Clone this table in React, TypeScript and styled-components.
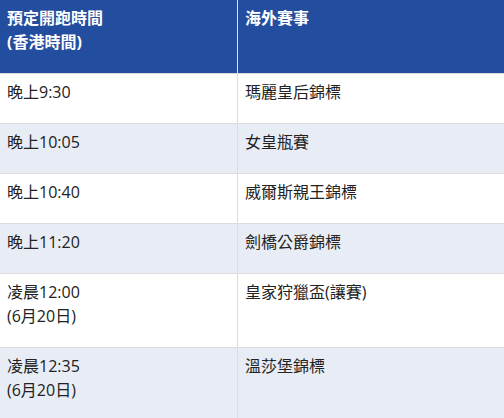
import React from 'react';
import styled, { createGlobalStyle } from 'styled-components';

const GlobalStyle = createGlobalStyle`
  html, body {
    margin: 0;
    padding: 0;
    background: #fff;
  }
  body {
    font-family: "Open Sans", "Noto Sans CJK TC", sans-serif;
  }
`;

const races = [
  { time: ['晚上9:30'], name: '瑪麗皇后錦標' },
  { time: ['晚上10:05'], name: '女皇瓶賽' },
  { time: ['晚上10:40'], name: '威爾斯親王錦標' },
  { time: ['晚上11:20'], name: '劍橋公爵錦標' },
  { time: ['凌晨12:00', '(6月20日)'], name: '皇家狩獵盃(讓賽)' },
  { time: ['凌晨12:35', '(6月20日)'], name: '溫莎堡錦標' },
];

const Table = styled.table`
  width: 100%;
  border-collapse: collapse;
  table-layout: fixed;
  font-size: 16px;
  line-height: 24px;
  color: #222;
`;

const HeadCell = styled.th`
  background: #234e9f;
  color: #fff;
  font-weight: bold;
  text-align: left;
  vertical-align: top;
  padding: 6px 7px 19px;
  border-right: 1px solid #dfe4ee;
  border-bottom: 1px solid #dcdcdc;
  &:first-child {
    width: 223px;
  }
  &:last-child {
    border-right: none;
  }
`;

const Row = styled.tr<{ $shaded?: boolean }>`
  background: ${({ $shaded }) => ($shaded ? '#e8ecf4' : '#fff')};
`;

const Cell = styled.td`
  text-align: left;
  vertical-align: top;
  padding: 6px 7px 19px;
  border-right: 1px solid #dcdcdc;
  border-bottom: 1px solid #dcdcdc;
  &:last-child {
    border-right: none;
  }
`;

const Line = styled.div``;

export default function App() {
  return (
    <>
      <GlobalStyle />
      <Table>
        <thead>
          <tr>
            <HeadCell>
              <Line>預定開跑時間</Line>
              <Line>(香港時間)</Line>
            </HeadCell>
            <HeadCell>海外賽事</HeadCell>
          </tr>
        </thead>
        <tbody>
          {races.map((race, i) => (
            <Row key={race.name} $shaded={i % 2 === 1}>
              <Cell>
                {race.time.map((t) => (
                  <Line key={t}>{t}</Line>
                ))}
              </Cell>
              <Cell>{race.name}</Cell>
            </Row>
          ))}
        </tbody>
      </Table>
    </>
  );
}
